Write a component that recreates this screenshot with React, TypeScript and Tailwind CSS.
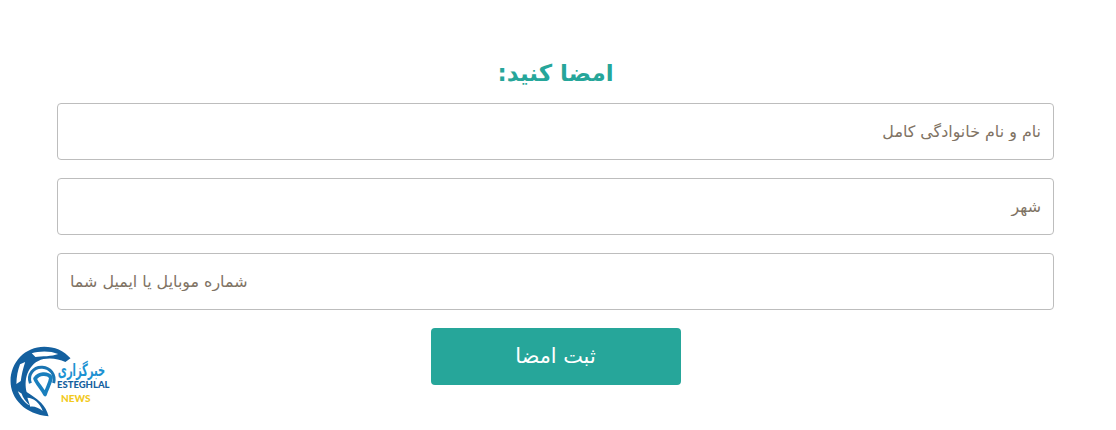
const font = { fontFamily: '"DejaVu Sans", "Liberation Sans", sans-serif' };
const latin = { fontFamily: 'Lato, "Open Sans", sans-serif' };

function Logo() {
  return (
    <div className="absolute left-[8px] top-[344px] h-[72px] w-[106px]">
      <svg width="66" height="79" viewBox="0 0 180 216" className="absolute left-[1px] top-[-1px]">
        <path d="M168 42 C150 20 124 10 96 10 C44 10 4 52 4 104 C4 152 44 196 108 200 C104 186 98 174 88 164 C74 150 60 142 48 134 C44 120 44 100 50 84 C58 64 74 48 94 44 C116 40 136 44 154 52 Z" fill="#14609f" />
        <path d="M62 28 C80 22 112 20 134 30 C118 37 88 36 72 38 Z" fill="#ffffff" />
        <path d="M30 58 L44 52 C38 70 34 88 32 104 L20 112 C20 92 24 74 30 58 Z" fill="#ffffff" />
        <path d="M24 132 L34 138 C38 150 46 160 56 170 C44 166 32 150 24 132 Z" fill="#ffffff" />
        <path d="M50 150 C66 150 84 164 92 186 C80 176 68 172 58 174 Z" fill="#ffffff" />
        <g transform="translate(0 8) scale(0.91)">
          <path d="M64 112 C54 86 74 62 100 64 C124 66 140 86 134 112" fill="none" stroke="#1a74b2" strokeWidth="9" />
          <path d="M78 98 C90 82 114 80 126 94 C124 114 114 126 108 146 C98 126 84 114 78 98 Z" fill="#ffffff" stroke="#1a7fbd" strokeWidth="11" strokeLinejoin="round" />
        </g>
      </svg>
      <div
        dir="rtl"
        className="absolute left-[53px] top-[15px] w-[76px] origin-left scale-x-[0.58] text-right text-[17px] font-bold leading-[22px] text-[#1d92d2]"
        style={font}
      >
        خبرگزاری
      </div>
      <div className="absolute left-[49px] top-[36px] text-[9.5px] font-black leading-none text-[#15609e]" style={latin}>ESTEGHLAL</div>
      <div className="absolute left-[53px] top-[49px] text-[10px] font-black leading-none text-[#f2c91c]" style={latin}>NEWS</div>
    </div>
  );
}

const inputClass =
  "h-[57px] w-full rounded-[4px] border border-[#bdbdbd] px-3 text-[15.9px] outline-none placeholder:text-[#7f7364]";

export default function App() {
  return (
    <div className="relative h-[430px] w-[1116px] overflow-hidden bg-white" style={font}>
      <div className="flex flex-col items-center pl-[57px] pr-[62px] pt-[51px]">
        <h2 dir="rtl" className="mb-[8px] h-[44px] text-[23px] font-bold leading-[44px] text-[#26a69a]">امضا کنید:</h2>
        <form className="flex w-full flex-col items-center gap-[18px]">
          <input dir="rtl" placeholder="نام و نام خانوادگی کامل" className={inputClass} />
          <input dir="rtl" placeholder="شهر" className={inputClass} />
          <input dir="ltr" placeholder="شماره موبایل یا ایمیل شما" className={inputClass} />
          <button type="button" dir="rtl" className="h-[57px] w-[250px] rounded-[4px] bg-[#26a69a] text-[20.8px] text-white">ثبت امضا</button>
        </form>
      </div>
      <Logo />
    </div>
  );
}
